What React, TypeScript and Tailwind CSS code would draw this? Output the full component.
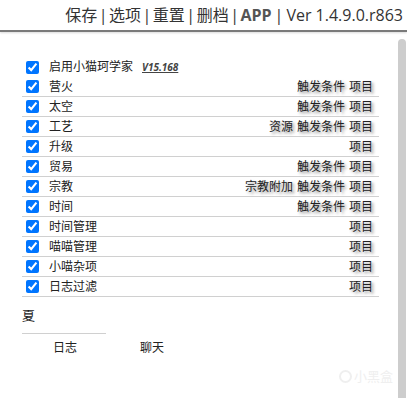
const FONT = "font-['Segoe_UI','Open_Sans','Noto_Sans_CJK_SC',sans-serif]";

type Row = { label: string; links: string[]; version?: string; noBorder?: boolean };

const ROWS: Row[] = [
  { label: "启用小猫珂学家", links: [], version: "V15.168", noBorder: true },
  { label: "营火", links: ["触发条件", "项目"] },
  { label: "太空", links: ["触发条件", "项目"] },
  { label: "工艺", links: ["资源", "触发条件", "项目"] },
  { label: "升级", links: ["项目"] },
  { label: "贸易", links: ["触发条件", "项目"] },
  { label: "宗教", links: ["宗教附加", "触发条件", "项目"] },
  { label: "时间", links: ["触发条件", "项目"] },
  { label: "时间管理", links: ["项目"] },
  { label: "喵喵管理", links: ["项目"] },
  { label: "小喵杂项", links: ["项目"] },
  { label: "日志过滤", links: ["项目"] },
];

const HEADER = ["保存", "选项", "重置", "删档"];

function Sep({ wide }: { wide?: boolean }) {
  return <span className={wide ? "mx-[3px]" : "mx-[1.5px]"}>|</span>;
}

export default function App() {
  return (
    <div className={"relative w-[407px] h-[398px] bg-white overflow-hidden flex flex-col text-[#222] " + FONT}>
      {/* Top menu */}
      <div className="h-[32px] shrink-0 flex items-center justify-end pr-[4px] border-b-2 border-[#7a7a7a] shadow-[0_1px_2px_rgba(0,0,0,0.15)] text-[16px] text-[#333] whitespace-pre">
        {HEADER.map((h) => (
          <span key={h} className="flex">
            <span>{h}</span>
            <Sep />
          </span>
        ))}
        <span className="font-bold text-[#555]">APP</span>
        <Sep wide />
        <span>Ver 1.4.9.0.r863</span>
      </div>

      <div className="flex-1 flex">
        <div className="flex-1 pl-[22px] pr-[19px] pt-[25px]">
          {ROWS.map((r) => (
            <div
              key={r.label}
              className={
                "h-[20px] flex items-center text-[12px] " +
                (r.noBorder ? "" : "border-b border-[#d0d0d0]")
              }
            >
              <input
                type="checkbox"
                checked
                readOnly
                className="ml-[4px] w-[13px] h-[13px] m-0 accent-[#0075ff]"
              />
              <span className="ml-[10px]">{r.label}</span>
              {r.version && (
                <span className="ml-[9px] text-[10px] italic font-bold underline text-[#444]">{r.version}</span>
              )}
              <div className="ml-auto flex gap-[4px] pr-[6px]">
                {r.links.map((l) => (
                  <span key={l} className="[text-shadow:2px_2px_3px_rgba(0,0,0,0.45)]">
                    {l}
                  </span>
                ))}
              </div>
            </div>
          ))}

          <div className="mt-[9px] text-[13px] leading-[18px]">夏</div>
          <div className="mt-[9px] w-[84px] border-t border-[#d0d0d0]" />
          <div className="flex text-[12px] leading-[16px] mt-[6px]">
            <span className="ml-[31px]">日志</span>
            <span className="ml-[63px]">聊天</span>
          </div>
        </div>

        {/* scrollbar */}
        <div className="w-[8px] mr-[1px] pt-[7px] flex flex-col">
          <div className="flex-1 rounded-t-[4px] bg-[#cdcdcd]" />
        </div>
      </div>

      {/* watermark */}
      <div className="absolute right-[14px] bottom-[12px] flex items-center gap-[2px] text-[13px] text-[#efefef]">
        <span className="w-[13px] h-[13px] rounded-full border-2 border-[#efefef]" />
        <span>小黑盒</span>
      </div>
    </div>
  );
}
